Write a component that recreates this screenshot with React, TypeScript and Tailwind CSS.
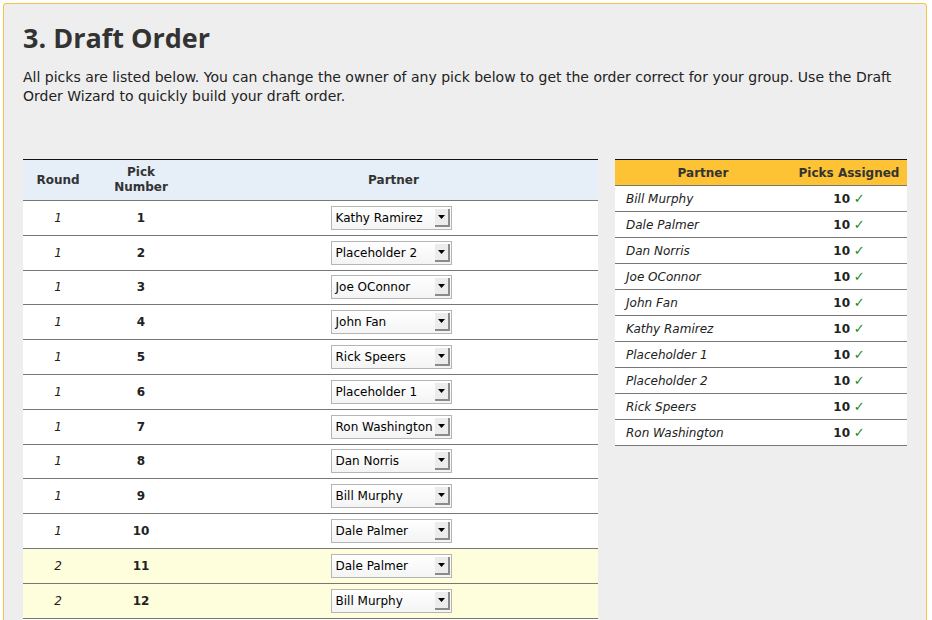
const picks = [
  { round: 1, pick: 1, partner: "Kathy Ramirez" },
  { round: 1, pick: 2, partner: "Placeholder 2" },
  { round: 1, pick: 3, partner: "Joe OConnor" },
  { round: 1, pick: 4, partner: "John Fan" },
  { round: 1, pick: 5, partner: "Rick Speers" },
  { round: 1, pick: 6, partner: "Placeholder 1" },
  { round: 1, pick: 7, partner: "Ron Washington" },
  { round: 1, pick: 8, partner: "Dan Norris" },
  { round: 1, pick: 9, partner: "Bill Murphy" },
  { round: 1, pick: 10, partner: "Dale Palmer" },
  { round: 2, pick: 11, partner: "Dale Palmer" },
  { round: 2, pick: 12, partner: "Bill Murphy" },
];

const partners = [
  "Bill Murphy",
  "Dale Palmer",
  "Dan Norris",
  "Joe OConnor",
  "John Fan",
  "Kathy Ramirez",
  "Placeholder 1",
  "Placeholder 2",
  "Rick Speers",
  "Ron Washington",
];

function FakeSelect({ value }: { value: string }) {
  return (
    <div className="flex h-[24px] w-[121px] border border-[#b5b5b5] bg-gradient-to-b from-white to-[#f4f4f4]">
      <span className="flex-1 truncate pl-[4px] text-[12px] leading-[22px] text-black">{value}</span>
      <span className="my-[2px] mr-[1px] flex w-[15px] items-center justify-center border-r-2 border-b-2 border-[#8a8a8a] bg-[#ececec]">
        <svg width="7" height="4" viewBox="0 0 7 4">
          <path d="M0 0h7L3.5 4z" fill="#000" />
        </svg>
      </span>
    </div>
  );
}

export default function App() {
  return (
    <div
      className="h-[620px] overflow-hidden bg-white pl-[3px] pr-[5px] pt-[3px] text-[#222]"
      style={{ fontFamily: '"DejaVu Sans", Verdana, sans-serif' }}
    >
      <div className="h-[640px] rounded-[3px] border border-[#f6c244] bg-[#eeeeee] pl-[19px] pr-[10px] pt-[16px]">
        <h1
          className="text-[27px] font-bold leading-[36px] text-[#333]"
          style={{ fontFamily: '"Open Sans", "DejaVu Sans", sans-serif' }}
        >
          3. Draft Order
        </h1>
        <p className="mt-[12px] text-[14px] leading-[19px] text-[#222]">
          All picks are listed below. You can change the owner of any pick below to get the order correct for your group. Use the Draft Order Wizard to quickly build your draft order.
        </p>

        <div className="mt-[53px] flex items-start gap-[17px]">
          {/* Picks table */}
          <div className="w-[575px] border-t border-[#111] bg-white pb-[4px]">
            <div className="grid h-[41px] grid-cols-[70px_96px_1fr] items-center border-b border-[#777] bg-[#e6eef7] text-[12px] font-bold text-[#333]">
              <div className="text-center">Round</div>
              <div className="text-center leading-[15px]">
                Pick
                <br />
                Number
              </div>
              <div className="text-center">Partner</div>
            </div>
            {picks.map((p) => (
              <div
                key={p.pick}
                className={`grid h-[34.8px] grid-cols-[70px_96px_1fr] items-center border-b border-[#777] text-[12px] ${
                  p.round === 2 ? "bg-[#fefedd]" : "bg-white"
                }`}
              >
                <div className="text-center italic">{p.round}</div>
                <div className="text-center font-bold">{p.pick}</div>
                <div className="flex justify-center pr-[5px]">
                  <FakeSelect value={p.partner} />
                </div>
              </div>
            ))}
          </div>

          {/* Summary table */}
          <div className="w-[292px] border-t border-[#111] bg-white">
            <div className="grid h-[26px] grid-cols-[176px_1fr] items-center border-b border-[#777] bg-[#fdc334] text-[12px] font-bold text-[#333]">
              <div className="text-center">Partner</div>
              <div className="text-center">Picks Assigned</div>
            </div>
            {partners.map((name) => (
              <div key={name} className="grid h-[26px] grid-cols-[176px_1fr] items-center border-b border-[#777] text-[12px]">
                <div className="pl-[11px] italic">{name}</div>
                <div className="text-center">
                  <span className="font-bold">10</span> <span className="text-[13px] text-[#168c16]">✓</span>
                </div>
              </div>
            ))}
          </div>
        </div>
      </div>
    </div>
  );
}
